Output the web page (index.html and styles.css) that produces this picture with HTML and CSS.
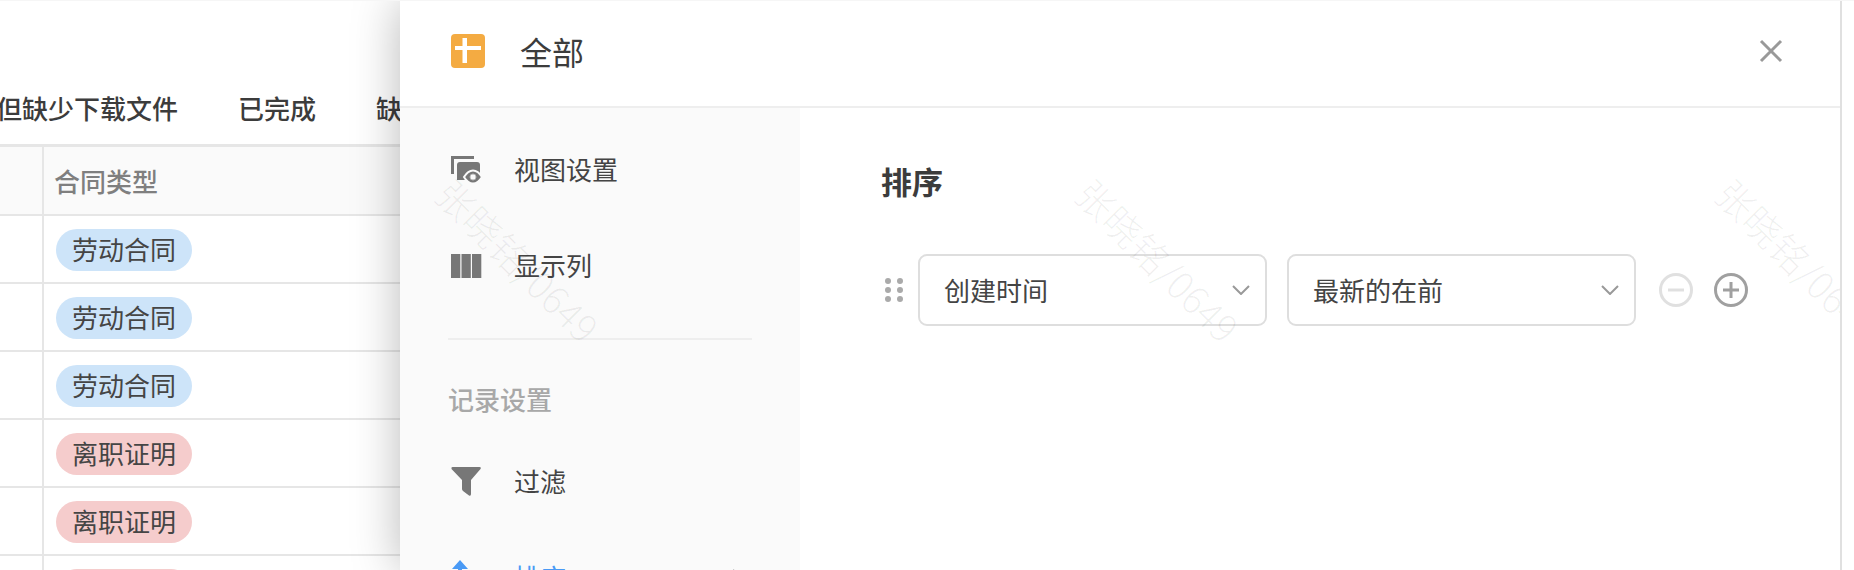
FILE: index.html
```html
<!DOCTYPE html>
<html lang="zh-CN">
<head>
<meta charset="utf-8">
<title>排序</title>
<link rel="stylesheet" href="styles.css">
</head>
<body>
<div class="page">
  <section class="list">
    <nav class="tabs">
      <span class="tab">但缺少下载文件</span>
      <span class="tab">已完成</span>
      <span class="tab">缺</span>
    </nav>
    <div class="table">
      <div class="row head"><div class="cell-a"></div><div class="cell-b">合同类型</div></div>
      <div class="row"><div class="cell-a"></div><div class="cell-b"><span class="pill blue">劳动合同</span></div></div>
      <div class="row"><div class="cell-a"></div><div class="cell-b"><span class="pill blue">劳动合同</span></div></div>
      <div class="row"><div class="cell-a"></div><div class="cell-b"><span class="pill blue">劳动合同</span></div></div>
      <div class="row"><div class="cell-a"></div><div class="cell-b"><span class="pill pink">离职证明</span></div></div>
      <div class="row"><div class="cell-a"></div><div class="cell-b"><span class="pill pink">离职证明</span></div></div>
      <div class="row"><div class="cell-a"></div><div class="cell-b"><span class="pill pink">离职证明</span></div></div>
    </div>
  </section>

  <aside class="drawer">
    <header class="drawer-head">
      <svg class="logo" width="34" height="34" viewBox="0 0 34 34"><rect width="34" height="34" rx="4" fill="#f4ab42"/><rect x="4" y="12" width="26" height="4" fill="#fff"/><rect x="11.500" y="4" width="4.500" height="25" fill="#fff"/></svg>
      <h1 class="drawer-title">全部</h1>
      <svg class="close" width="24" height="24" viewBox="0 0 24 24"><path d="M2 2 L22 22 M22 2 L2 22" stroke="#999" stroke-width="3" fill="none"/></svg>
    </header>
    <div class="drawer-body">
      <nav class="side">
        <div class="item">
          <svg class="ico" width="32" height="28" viewBox="0 0 32 28"><path d="M23 1.500 H1.500 V18" fill="none" stroke="#777" stroke-width="3"/><path d="M6 9 q0-3 3-3 h17 q3 0 3 3 v15 h-23 z" fill="#777"/><path d="M13 21 q4-6.500 9-6.500 t9 6.500 q-4 6.500-9 6.500 t-9-6.500z" fill="#777" stroke="#fafafa" stroke-width="2"/><circle cx="22" cy="21" r="3" fill="#fafafa" stroke="#bbb" stroke-width="1"/></svg>
          <span class="item-text">视图设置</span>
        </div>
        <div class="item">
          <svg class="ico" width="32" height="24" viewBox="0 0 32 24"><rect x="0" width="9.300" height="24" fill="#777"/><rect x="10.500" width="9.300" height="24" fill="#777"/><rect x="21" width="9.300" height="24" fill="#777"/></svg>
          <span class="item-text">显示列</span>
        </div>
        <div class="divider"></div>
        <div class="side-label">记录设置</div>
        <div class="item">
          <svg class="ico" width="32" height="30" viewBox="0 0 32 30"><path d="M1.500 0 H28.500 Q30.500 0 29.500 2 L20 13 V27 Q20 29.500 18 28.500 L12 24 Q11 23 11 22 V13 L.5 2 Q0 0 1.500 0z" fill="#777"/></svg>
          <span class="item-text">过滤</span>
        </div>
        <div class="item active">
          <svg class="ico arrow" width="32" height="30" viewBox="0 0 32 30"><path d="M9 0 L17 9 H11 V30 H7 V9 H1 z" fill="#4a9af5"/></svg>
          <span class="item-text">排序</span>
          <svg class="caret" width="12" height="20" viewBox="0 0 12 20"><path d="M2 2 L10 10 L2 18" fill="none" stroke="#999" stroke-width="2"/></svg>
        </div>
      </nav>
      <main class="panel">
        <h2 class="panel-title">排序</h2>
        <div class="sort-row">
          <div class="handle"><i></i><i></i><i></i><i></i><i></i><i></i></div>
          <div class="select"><span>创建时间</span><svg width="18" height="10" viewBox="0 0 18 10"><path d="M1 1 L9 9 L17 1" fill="none" stroke="#999" stroke-width="2"/></svg></div>
          <div class="select"><span>最新的在前</span><svg width="18" height="10" viewBox="0 0 18 10"><path d="M1 1 L9 9 L17 1" fill="none" stroke="#999" stroke-width="2"/></svg></div>
          <div class="ops">
            <svg width="34" height="34" viewBox="0 0 34 34"><circle cx="17" cy="17" r="15.500" fill="none" stroke="#e0e0e0" stroke-width="3"/><path d="M9 17 H25" stroke="#e0e0e0" stroke-width="3"/></svg>
            <svg width="34" height="34" viewBox="0 0 34 34"><circle cx="17" cy="17" r="15.500" fill="none" stroke="#a0a0a0" stroke-width="3"/><path d="M9 17 H25 M17 9 V25" stroke="#a0a0a0" stroke-width="3"/></svg>
          </div>
        </div>
      </main>
    </div>
    <span class="mark mark-1">张晓铭/0649</span>
    <span class="mark mark-2">张晓铭/0649</span>
    <span class="mark mark-3">张晓铭/0649</span>
  </aside>
  <div class="gutter"></div>
</div>
</body>
</html>
```

FILE: styles.css
```css
* { box-sizing: border-box; }
html, body { margin: 0; height: 570px; overflow: hidden; background: #fff; }
body {
  font-family: "Noto Sans CJK SC", "Noto Sans", sans-serif;
  font-size: 26px;
  color: #444;
}
.page { display: flex; height: 570px; border-top: 1px solid #f6f6f6; }

.list { width: 400px; flex: none; overflow: hidden; }
.tabs {
  display: flex;
  height: 143px;
  padding-top: 88px;
  margin-left: -4px;
  white-space: nowrap;
  font-weight: 500;
  font-size: 26px;
  line-height: 38px;
  color: #3c3c3c;
}
.tab { flex: none; margin-right: 60px; }

.table { border-top: 3px solid #e6e6e6; }
.row { display: flex; height: 68px; border-bottom: 2px solid #e6e6e6; }
.row.head { height: 69px; background: #fafafa; color: #7f7f7f; font-weight: 500; }
.cell-a { width: 44px; flex: none; border-right: 2px solid #e6e6e6; }
.cell-b { flex: 1; display: flex; align-items: center; padding-left: 10px; }
.pill {
  display: flex;
  align-items: center;
  justify-content: center;
  width: 136px;
  height: 42px;
  margin: 1px 0 0 2px;
  padding-bottom: 2px;
  border-radius: 21px;
  line-height: 40px;
  color: #454545;
}
.blue { background: #cde4f9; }
.pink { background: #f5cccc; }

.drawer {
  position: relative;
  z-index: 2;
  flex: none;
  width: 1442px;
  display: flex;
  flex-direction: column;
  overflow: hidden;
  border-right: 2px solid #e0e0e0;
  background: #fff;
  clip-path: inset(0 0 0 -60px);
  box-shadow: 0 0 45px rgba(0, 0, 0, .28);
}
.drawer-head {
  flex: none;
  height: 107px;
  display: flex;
  align-items: center;
  padding: 0 57px 5px 51px;
  border-bottom: 2px solid #eee;
}
.drawer-title { margin: 0 0 0 35px; font-size: 32px; font-weight: 400; line-height: 46px; color: #3c3c3c; }
.close { margin-left: auto; }

.drawer-body { flex: 1; display: flex; min-height: 0; }
.side {
  width: 400px;
  flex: none;
  padding: 14px 48px 0;
  background: #fafafa;
}
.item { display: flex; align-items: center; height: 96px; padding-left: 3px; }
.ico { flex: none; margin-right: 31px; }
.item-text { margin-top: -4px; }
.active { color: #4a9af5; }
.arrow { align-self: flex-start; margin-top: 30px; }
.caret { margin-left: auto; margin-right: 9px; }
.divider { height: 2px; margin-top: 24px; background: #eee; }
.side-label { margin-top: 39px; margin-bottom: 15px; line-height: 40px; font-weight: 500; color: #a8a8a8; }

.panel { flex: 1; padding: 51px 0 0 81px; }
.panel-title { margin: 0; font-size: 31px; font-weight: 700; line-height: 44px; color: #3c3c3c; }
.sort-row { display: flex; align-items: center; margin-top: 51px; }
.handle {
  flex: none;
  display: grid;
  grid-template-columns: 6px 6px;
  grid-auto-rows: 6px;
  gap: 3px 6px;
  margin: 0 15px 0 4px;
}
.handle i { border-radius: 50%; background: #aaa; }
.select {
  flex: none;
  display: flex;
  align-items: center;
  justify-content: space-between;
  width: 349px;
  height: 72px;
  padding: 0 15px 0 24px;
  margin-right: 20px;
  border: 2px solid #dedede;
  border-radius: 9px;
  line-height: 40px;
}
.ops { display: flex; gap: 21px; margin-left: 3px; }

.mark {
  position: absolute;
  top: 236px;
  width: 300px;
  text-align: center;
  font-size: 38px;
  font-weight: 300;
  line-height: 46px;
  white-space: nowrap;
  color: rgba(0, 0, 0, .06);
  transform: rotate(45deg);
  pointer-events: none;
}
.mark-1 { left: -32px; }
.mark-2 { left: 608px; }
.mark-3 { left: 1248px; }

.gutter { flex: 1; }
```
